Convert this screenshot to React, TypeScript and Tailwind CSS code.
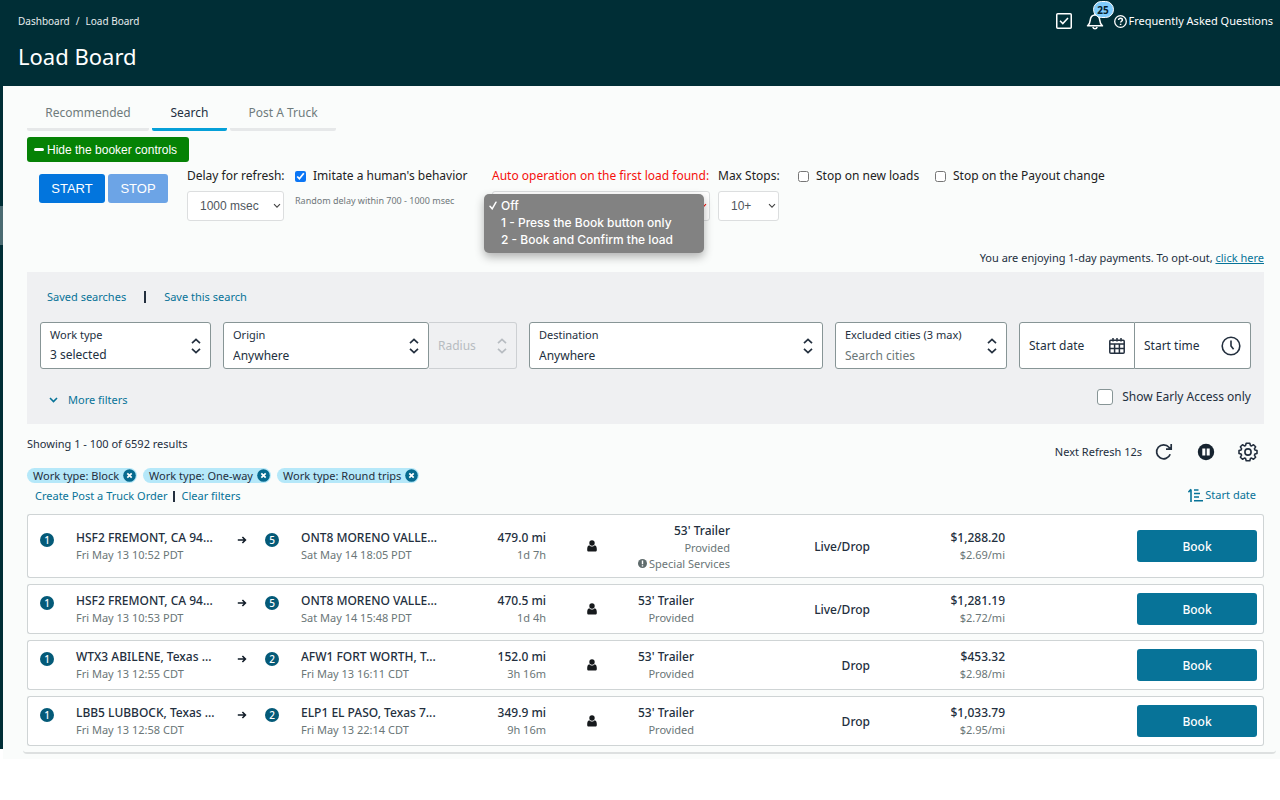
import React from 'react';

interface Load {
  stops: number;
  origin: string;
  departs: string;
  destination: string;
  arrives: string;
  distance: string;
  duration: string;
  special?: boolean;
  type: string;
  price: string;
  rate: string;
}

const loads: Load[] = [
  {
    stops: 5,
    origin: 'HSF2 FREMONT, CA 94...',
    departs: 'Fri May 13 10:52 PDT',
    destination: 'ONT8 MORENO VALLE...',
    arrives: 'Sat May 14 18:05 PDT',
    distance: '479.0 mi',
    duration: '1d 7h',
    special: true,
    type: 'Live/Drop',
    price: '$1,288.20',
    rate: '$2.69/mi',
  },
  {
    stops: 5,
    origin: 'HSF2 FREMONT, CA 94...',
    departs: 'Fri May 13 10:53 PDT',
    destination: 'ONT8 MORENO VALLE...',
    arrives: 'Sat May 14 15:48 PDT',
    distance: '470.5 mi',
    duration: '1d 4h',
    type: 'Live/Drop',
    price: '$1,281.19',
    rate: '$2.72/mi',
  },
  {
    stops: 2,
    origin: 'WTX3 ABILENE, Texas ...',
    departs: 'Fri May 13 12:55 CDT',
    destination: 'AFW1 FORT WORTH, T...',
    arrives: 'Fri May 13 16:11 CDT',
    distance: '152.0 mi',
    duration: '3h 16m',
    type: 'Drop',
    price: '$453.32',
    rate: '$2.98/mi',
  },
  {
    stops: 2,
    origin: 'LBB5 LUBBOCK, Texas ...',
    departs: 'Fri May 13 12:58 CDT',
    destination: 'ELP1 EL PASO, Texas 7...',
    arrives: 'Fri May 13 22:14 CDT',
    distance: '349.9 mi',
    duration: '9h 16m',
    type: 'Drop',
    price: '$1,033.79',
    rate: '$2.95/mi',
  },
];

const chips = ['Work type: Block', 'Work type: One-way', 'Work type: Round trips'];

const UpDown: React.FC = () => (
  <svg className="pointer-events-none shrink-0" width="10" height="16" viewBox="0 0 10 16" fill="none" stroke="currentColor" strokeWidth="1.7">
    <path d="M1 5.2 5 1.4l4 3.8M1 10.8l4 3.8 4-3.8" />
  </svg>
);

const Chevron: React.FC<{ className?: string }> = ({ className }) => (
  <svg className={className} width="8" height="6" viewBox="0 0 8 6" fill="none" stroke="currentColor" strokeWidth="1.1">
    <path d="m1 1.2 3 3 3-3" />
  </svg>
);

const Header: React.FC = () => (
  <header className="flex h-[86px] items-start justify-between bg-[#002e36] pl-[18px] pr-[7px] text-white">
    <div>
      <nav aria-label="Breadcrumb" className="flex gap-[6px] pt-[14px] text-[10px] leading-[14px] text-[#e6eced]">
        <a href="#dashboard">Dashboard</a>
        <span>/</span>
        <a href="#load-board">Load Board</a>
      </nav>
      <h1 className="mt-[13px] text-[22px] leading-[30px]">Load Board</h1>
    </div>
    <div className="flex h-[42px] items-center">
      <button aria-label="Tasks">
        <svg width="16" height="16" viewBox="0 0 16 16" fill="none" stroke="currentColor" strokeWidth="1.5">
          <rect x=".75" y=".75" width="14.5" height="14.5" rx="1" />
          <path d="m4 7.8 2.8 2.8L12 5" />
        </svg>
      </button>
      <button aria-label="Notifications" className="relative ml-[14px]">
        <svg width="18" height="18" viewBox="0 0 18 18" fill="none" stroke="currentColor" strokeWidth="1.5">
          <path d="M1.500 13.800c1.900-1.200 2.500-3 2.700-5.400C4.500 4.900 6 3 9 3s4.500 1.900 4.800 5.400c.2 2.400.8 4.200 2.700 5.400z" strokeLinejoin="round" />
          <path d="M9 1v2M6.800 15c.4 1.300 1.100 1.800 2.200 1.800s1.800-.5 2.200-1.800" />
        </svg>
        <span className="absolute -top-[11px] left-[7px] flex h-[17px] w-[21px] items-center justify-center rounded-full border border-white bg-[#80ccfb] text-[10px] font-bold leading-none text-[#06222c]">
          25
        </span>
      </button>
      <a href="#faq" className="ml-[10px] flex items-center gap-[2px] text-[11px] leading-4">
        <svg width="13" height="13" viewBox="0 0 13 13" fill="none" stroke="currentColor" strokeWidth="1.3">
          <circle cx="6.500" cy="6.500" r="5.800" />
          <path d="M4.600 5.100c0-1.200.8-1.900 1.900-1.900s1.900.7 1.900 1.700c0 1.300-1.800 1.400-1.800 2.700M6.600 8.700v1.400" strokeWidth="1.500" />
        </svg>
        Frequently Asked Questions
      </a>
    </div>
  </header>
);

const BookerControls: React.FC = () => (
  <section aria-label="Booker controls" className="flex h-[83px] items-start pl-3 pt-[6px] text-[12px] leading-4 text-[#222]">
    <div className="mt-[6px] flex gap-[3px] font-['Liberation_Sans',sans-serif] text-[13px] text-white">
      <button className="h-[29px] w-[66px] rounded-[3px] bg-[#0275dd]">START</button>
      <button className="h-[29px] w-[60px] rounded-[3px] bg-[#6ca4e6]">STOP</button>
    </div>
    <div className="ml-[19px] w-[97px] shrink-0">
      <label htmlFor="delay" className="block whitespace-nowrap">Delay for refresh:</label>
      <div className="relative mt-[7px]">
        <select id="delay" className="h-[30px] w-full appearance-none rounded-[3px] border border-[#dcdedf] bg-white pl-3 font-['Liberation_Sans',sans-serif] text-[12px] text-[#4f565d]">
          <option>1000 msec</option>
        </select>
        <Chevron className="pointer-events-none absolute right-[3px] top-3 text-[#444]" />
      </div>
    </div>
    <div className="ml-[11px] w-[184px] shrink-0">
      <label className="flex items-center gap-[7px] whitespace-nowrap">
        <input type="checkbox" defaultChecked className="size-[11px] accent-[#0b76f5]" />
        Imitate a human's behavior
      </label>
      <p className="mt-[9px] text-[9px] leading-4 text-[#6f777a]">Random delay within 700 - 1000 msec</p>
    </div>
    <div className="relative ml-[13px] w-[218px] shrink-0">
      <label htmlFor="auto" className="block whitespace-nowrap text-[#f5100c]">Auto operation on the first load found:</label>
      <div className="relative mt-[7px]">
        <select id="auto" className="h-[30px] w-full appearance-none rounded-[3px] border border-[#dcdedf] bg-white pl-3 font-['Liberation_Sans',sans-serif] text-[12px] text-[#f5100c]">
          <option>Off</option>
        </select>
        <Chevron className="pointer-events-none absolute right-[3px] top-3 text-[#f5100c]" />
      </div>
      <ul
        role="listbox"
        aria-label="Auto operation"
        className="absolute -left-2 top-[26px] z-10 w-[220px] rounded-[5px] bg-[#828282] py-[3px] font-['Inter',sans-serif] text-[12px] font-medium leading-[17px] text-white shadow-[0_4px_10px_rgba(0,0,0,0.3)]"
      >
        <li role="option" aria-selected="true" className="flex items-center pl-[5px]">
          <svg className="mr-1" width="8" height="9" viewBox="0 0 8 9" fill="none" stroke="currentColor" strokeWidth="1.5" strokeLinecap="round">
            <path d="m1 5.200 2.200 2.600L7 1.200" />
          </svg>
          Off
        </li>
        <li role="option" aria-selected="false" className="pl-[17px]">1 - Press the Book button only</li>
        <li role="option" aria-selected="false" className="pl-[17px] pb-[2px]">2 - Book and Confirm the load</li>
      </ul>
    </div>
    <div className="ml-2 w-[61px] shrink-0">
      <label htmlFor="stops" className="block whitespace-nowrap">Max Stops:</label>
      <div className="relative mt-[7px]">
        <select id="stops" className="h-[30px] w-full appearance-none rounded-[3px] border border-[#dcdedf] bg-white pl-3 font-['Liberation_Sans',sans-serif] text-[12px] text-[#4f565d]">
          <option>10+</option>
        </select>
        <Chevron className="pointer-events-none absolute right-[3px] top-3 text-[#444]" />
      </div>
    </div>
    <label className="ml-[19px] flex w-[137px] items-center gap-[7px] whitespace-nowrap">
      <input type="checkbox" className="size-[11px]" />
      Stop on new loads
    </label>
    <label className="flex items-center gap-[7px] whitespace-nowrap">
      <input type="checkbox" className="size-[11px]" />
      Stop on the Payout change
    </label>
  </section>
);

const fieldBox = 'flex h-[47px] min-w-0 items-center border border-[#879596] bg-white pl-[9px] pr-[9px]';

const Filters: React.FC = () => (
  <section aria-label="Search filters" className="bg-[#eff0f2] px-[13px] pt-[17px] pb-4">
    <div className="flex items-center pl-[7px] text-[11px] leading-4 text-[#077398]">
      <a href="#saved">Saved searches</a>
      <span className="mx-[18px] h-3 w-[2px] bg-[#232f3e]" />
      <a href="#save">Save this search</a>
    </div>
    <div className="mt-[17px] grid grid-cols-[171fr_294fr_294fr_172fr_232fr] gap-3">
      <div className={`${fieldBox} rounded-[3px]`}>
        <div className="min-w-0 grow pt-[3px]">
          <label htmlFor="work-type" className="block text-[11px] leading-4">Work type</label>
          <select id="work-type" className="block h-6 w-full appearance-none bg-transparent text-[12px]">
            <option>3 selected</option>
          </select>
        </div>
        <UpDown />
      </div>
      <div className="flex min-w-0">
        <div className={`${fieldBox} grow rounded-[3px]`}>
          <div className="min-w-0 grow pt-[3px]">
            <label htmlFor="origin" className="block text-[11px] leading-4">Origin</label>
            <input id="origin" defaultValue="Anywhere" className="block h-6 w-full bg-transparent text-[12px]" />
          </div>
          <UpDown />
        </div>
        <div className="flex h-[47px] w-[88px] shrink-0 items-center rounded-r-[3px] border border-l-0 border-[#cdd0d3] pl-[9px] pr-[9px] text-[#b7bcc1]">
          <select aria-label="Radius" disabled className="h-6 min-w-0 grow appearance-none bg-transparent text-[12px]">
            <option>Radius</option>
          </select>
          <UpDown />
        </div>
      </div>
      <div className={`${fieldBox} rounded-[3px]`}>
        <div className="min-w-0 grow pt-[3px]">
          <label htmlFor="destination" className="block text-[11px] leading-4">Destination</label>
          <input id="destination" defaultValue="Anywhere" className="block h-6 w-full bg-transparent text-[12px]" />
        </div>
        <UpDown />
      </div>
      <div className={`${fieldBox} rounded-[3px]`}>
        <div className="min-w-0 grow pt-[3px]">
          <label htmlFor="excluded" className="block whitespace-nowrap text-[11px] leading-4">Excluded cities (3 max)</label>
          <input id="excluded" placeholder="Search cities" className="block h-6 w-full bg-transparent text-[12px] placeholder:text-[#6a7677]" />
        </div>
        <UpDown />
      </div>
      <div className="grid min-w-0 grid-cols-2">
        <div className={`${fieldBox} rounded-l-[3px]`}>
          <input aria-label="Start date" placeholder="Start date" className="h-6 min-w-0 grow bg-transparent text-[12px] placeholder:text-[#232f3e]" />
          <svg className="shrink-0" width="16" height="16" viewBox="0 0 16 16" fill="none" stroke="currentColor" strokeWidth="1.5">
            <rect x=".8" y="2.200" width="14.400" height="13" rx="1" />
            <path d="M.8 6h14.400M.8 10.600h14.400M5.600 6v9M10.400 6v9M4 0v3.500M8 0v3.500M12 0v3.500" />
          </svg>
        </div>
        <div className={`${fieldBox} rounded-r-[3px] border-l-0`}>
          <input aria-label="Start time" placeholder="Start time" className="h-6 min-w-0 grow bg-transparent text-[12px] placeholder:text-[#232f3e]" />
          <svg className="shrink-0" width="20" height="20" viewBox="0 0 20 20" fill="none" stroke="currentColor" strokeWidth="1.600">
            <circle cx="10" cy="10" r="8.800" />
            <path d="M10 4.500V10l2.600 3.200" />
          </svg>
        </div>
      </div>
    </div>
    <div className="mt-5 flex items-start justify-between">
      <button className="mt-[3px] flex items-center gap-[10px] pl-[9px] text-[11px] leading-4 text-[#077398]">
        <svg width="9" height="6" viewBox="0 0 9 6" fill="none" stroke="currentColor" strokeWidth="1.600">
          <path d="m1 1 3.500 3.500L8 1" />
        </svg>
        More filters
      </button>
      <label className="flex items-center gap-[9px] text-[12px] leading-4">
        <input type="checkbox" className="size-4 appearance-none rounded-[3px] border border-[#879596] bg-white" />
        Show Early Access only
      </label>
    </div>
  </section>
);

const ResultsBar: React.FC = () => (
  <section aria-label="Results" className="flex justify-between pt-3 text-[11px] leading-4">
    <div>
      <p>Showing 1 - 100 of 6592 results</p>
      <div className="mt-4 flex gap-[6px]">
        {chips.map((chip) => (
          <span key={chip} className="flex h-[15px] items-center gap-1 rounded-full bg-[#b5e8f9] pl-[6px] pr-px">
            {chip}
            <button aria-label={`Remove ${chip}`}>
              <svg width="13" height="13" viewBox="0 0 13 13">
                <circle cx="6.500" cy="6.500" r="6.300" fill="#066a8f" />
                <path d="m4.300 4.300 4.400 4.400M8.700 4.300 4.300 8.700" stroke="#fff" strokeWidth="1.700" />
              </svg>
            </button>
          </span>
        ))}
      </div>
      <div className="mt-[5px] flex items-center pl-2 text-[#077398]">
        <a href="#post">Create Post a Truck Order</a>
        <span className="mx-[6px] h-[11px] w-[2px] bg-[#232f3e]" />
        <a href="#clear">Clear filters</a>
      </div>
    </div>
    <div className="flex flex-col items-end pt-[6px]">
      <div className="flex h-5 items-center pr-[6px]">
        <span>Next Refresh 12s</span>
        <button aria-label="Refresh" className="ml-[13px]">
          <svg width="18" height="18" viewBox="0 0 18 18" fill="none" stroke="currentColor" strokeWidth="1.700">
            <path d="M15.200 11.200A7 7 0 1 1 14 4.300l1.800 1.600M16.200 1v5.100H11" />
          </svg>
        </button>
        <button aria-label="Pause" className="ml-6">
          <svg width="18" height="18" viewBox="0 0 18 18">
            <circle cx="9" cy="9" r="8.200" fill="#16232f" />
            <path d="M5.300 5.500h3v7h-3zM9.700 5.500h3v7h-3z" fill="#fff" />
          </svg>
        </button>
        <button aria-label="Settings" className="ml-[23px]">
          <svg width="20" height="20" viewBox="0 0 20 20" fill="none" stroke="currentColor" strokeWidth="1.600" strokeLinejoin="round">
            <path d="M8.200 1.200h3.600l.6 2.200 1.100.5 2-1.200 2.100 2.100-1.200 2 .5 1.200 2.100.6v2.800l-2.100.6-.5 1.200 1.200 2-2.100 2.100-2-1.200-1.100.5-.6 2.200H8.200l-.6-2.200-1.100-.5-2 1.200-2.100-2.100 1.200-2-.5-1.200L1 11.400V8.600L3.100 8l.5-1.200-1.200-2 2.100-2.100 2 1.200 1.100-.5z" />
            <circle cx="10" cy="10" r="3.100" />
          </svg>
        </button>
      </div>
      <a href="#sort" className="mt-[25px] flex items-center gap-[2px] pr-2 text-[#077398]">
        <svg width="15" height="14" viewBox="0 0 15 14" fill="none" stroke="currentColor" strokeWidth="1.600">
          <path d="M3 14V1.500M.4 4.200 3 1.300M6 2h4.500M6 5.500h6M6 9h5M6 12.700h9" />
        </svg>
        Start date
      </a>
    </div>
  </section>
);

const StopBadge: React.FC<{ n: number }> = ({ n }) => (
  <span className="mb-3 flex size-[14px] items-center justify-center rounded-full bg-[#045a78] text-[10px] leading-none text-white">{n}</span>
);

const cell = 'border-y border-[#cfd4d5] bg-white p-0';
const sub = 'text-[11px] font-normal text-[#6a7677]';

const LoadTable: React.FC = () => (
  <table aria-label="Loads" className="mt-1 w-full table-fixed border-separate border-spacing-x-0 border-spacing-y-[6px]">
    <colgroup>
      <col className="w-[49px]" />
      <col />
      <col className="w-[36px]" />
      <col className="w-[36px]" />
      <col />
      <col className="w-[92px]" />
      <col className="w-[92px]" />
      <col className="w-[112px]" />
      <col className="w-[120px]" />
      <col className="w-[135px]" />
      <col className="w-[259px]" />
    </colgroup>
    <tbody className="text-[12px] font-medium leading-[17px]">
      {loads.map((load) => (
        <tr key={load.price} className={load.special ? 'h-[64px]' : 'h-[50px]'}>
          <td className={`${cell} rounded-l-[3px] border-l pl-3`}><StopBadge n={1} /></td>
          <td className={cell}>
            <div className="whitespace-nowrap">{load.origin}</div>
            <div className={sub}>{load.departs}</div>
          </td>
          <td className={`${cell} pl-2`}>
            <svg className="mb-3" width="10" height="8" viewBox="0 0 10 8" fill="none" stroke="#111c28" strokeWidth="1.600">
              <path d="M.8 4h7.500M5.400 1l3 3-3 3" />
            </svg>
          </td>
          <td className={cell}><StopBadge n={load.stops} /></td>
          <td className={cell}>
            <div className="whitespace-nowrap">{load.destination}</div>
            <div className={sub}>{load.arrives}</div>
          </td>
          <td className={`${cell} text-right`}>
            <div>{load.distance}</div>
            <div className={sub}>{load.duration}</div>
          </td>
          <td className={cell}>
            <svg className="mx-auto" width="10" height="12" viewBox="0 0 10 12" fill="#16191c" role="img" aria-label="Solo driver">
              <circle cx="5" cy="3" r="2.700" />
              <path d="M2.300 5.200C3 6.100 4 6.500 5 6.500s2-.4 2.700-1.300C9.200 5.600 9.800 7 9.800 9v1c0 1-.6 1.500-1.500 1.500H1.700C.8 11.500.2 11 .2 10V9c0-2 .6-3.400 2.100-3.800z" />
            </svg>
          </td>
          <td className={cell}>
            <div className="inline-block whitespace-nowrap text-right align-middle">
              <div>53' Trailer</div>
              <div className={sub}>Provided</div>
              {load.special && (
                <div className={`${sub} flex items-center gap-[2px] leading-[15px]`}>
                  <svg width="9" height="9" viewBox="0 0 9 9">
                    <circle cx="4.500" cy="4.500" r="4.500" fill="#5f6b6c" />
                    <path d="M4.500 1.600v3.600M4.500 6.200v1.300" stroke="#fff" strokeWidth="1.400" />
                  </svg>
                  Special Services
                </div>
              )}
            </div>
          </td>
          <td className={`${cell} text-right`}>{load.type}</td>
          <td className={`${cell} text-right`}>
            <div>{load.price}</div>
            <div className={sub}>{load.rate}</div>
          </td>
          <td className={`${cell} rounded-r-[3px] border-r pr-[6px]`}>
            <button className="ml-auto block h-[32px] w-[120px] rounded-[3px] bg-[#077398] text-white">Book</button>
          </td>
        </tr>
      ))}
    </tbody>
  </table>
);

const App: React.FC = () => (
  <div className="min-h-screen bg-white font-['Noto_Sans',sans-serif] text-[#232f3e]">
    <Header />
    <div className="flex">
      {/* Collapsed side menu */}
      <aside className="mb-[10px] w-[3px] shrink-0 bg-[#002e36] pt-[120px]">
        <div className="h-[39px] bg-[#4b6b72]" />
      </aside>
      <main className="min-w-0 grow bg-[#fafcfb] pb-[5px] pl-5 pr-1">
        <div className="rounded-b-[4px] border-b-2 border-[#dde0e0] pl-1 pr-3">
          <nav aria-label="Load board views" className="flex gap-[3px] pt-[17px] text-[12px] leading-5 text-[#6f7b7c]">
            <a href="#recommended" className="h-[28px] w-[122px] rounded-[2px] border-b-3 border-[#e6e8e9] text-center">Recommended</a>
            <a href="#search" aria-current="page" className="h-[28px] w-[75px] rounded-[2px] border-b-3 border-[#05a0d8] text-center text-[#232f3e]">Search</a>
            <a href="#post-a-truck" className="h-[28px] w-[106px] rounded-[2px] border-b-3 border-[#e6e8e9] text-center">Post A Truck</a>
          </nav>
          <button className="mt-[6px] flex h-[25px] w-[162px] items-center gap-[3px] whitespace-nowrap rounded-[3px] bg-[#058205] px-[7px] font-['Liberation_Sans',sans-serif] text-[12px] text-white">
            <span className="h-[3px] w-[10px] rounded-full bg-white" />
            Hide the booker controls
          </button>
          <BookerControls />
          <p className="mt-[5px] pb-[6px] text-right text-[11px] leading-4">
            You are enjoying 1-day payments. To opt-out,{' '}
            <a href="#opt-out" className="text-[#077398] underline">click here</a>
          </p>
          <Filters />
          <ResultsBar />
          <LoadTable />
        </div>
      </main>
    </div>
  </div>
);

export default App;
